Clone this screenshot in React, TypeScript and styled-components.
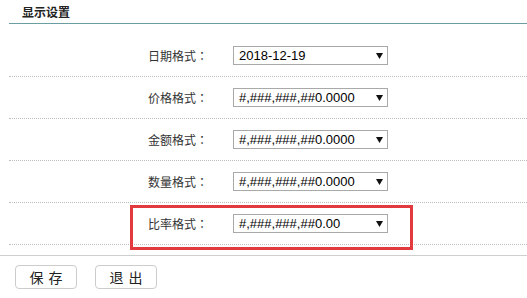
import React from "react";
import styled, { createGlobalStyle } from "styled-components";

const GlobalStyle = createGlobalStyle`
  html, body {
    margin: 0;
    padding: 0;
    background: #fff;
  }
  body {
    font-family: "Liberation Sans", "Noto Sans CJK SC", sans-serif;
    color: #333;
  }
`;

const Page = styled.div`
  width: 527px;
  height: 298px;
  overflow: hidden;
  background: #fff;
`;

const Header = styled.div`
  margin-left: 9px;
  height: 24px;
  border-bottom: 1.5px solid #6a9ea3;
  display: flex;
  align-items: center;
  padding-left: 13px;
  box-sizing: border-box;
`;

const Title = styled.h3`
  margin: 0;
  font-family: "Noto Sans CJK SC", sans-serif;
  font-size: 12px;
  font-weight: 700;
  color: #222;
`;

const Form = styled.div`
  margin-left: 9px;
  padding-top: 11px;
`;

const Row = styled.div`
  position: relative;
  height: 42px;
  box-sizing: border-box;
  border-bottom: 1px dotted #bdbdbd;
  display: grid;
  grid-template-columns: 199px 155px;
  column-gap: 25px;
  align-items: center;
`;

const Label = styled.span`
  text-align: right;
  font-family: "Noto Sans CJK SC", sans-serif;
  font-size: 12px;
  color: #333;
`;

const Colon = styled.span`
  display: inline-block;
  width: 12px;
  text-align: center;
  font-family: "Noto Sans CJK TC", sans-serif;
`;

const SelectBox = styled.div`
  height: 19px;
  box-sizing: border-box;
  border: 1px solid #a9a9a9;
  display: flex;
  align-items: center;
  justify-content: space-between;
  padding: 0 4px 0 5px;
  background: #fff;
  cursor: default;
`;

const SelectValue = styled.span`
  font-family: "Liberation Sans", Arial, sans-serif;
  font-size: 13px;
  color: #000;
  line-height: 1;
`;

const Highlight = styled.div`
  position: absolute;
  left: 121px;
  top: 2px;
  width: 283px;
  height: 45px;
  box-sizing: border-box;
  border: 3px solid #e23a3e;
  pointer-events: none;
`;

const Footer = styled.div`
  margin-top: 10px;
  border-top: 1px solid #cfcfcf;
  padding: 9px 0 0 15px;
  display: flex;
  gap: 18px;
`;

const Button = styled.button`
  width: 62px;
  height: 24px;
  background: #fff;
  border: 1px solid #cccccc;
  border-radius: 4px;
  font-family: "Noto Sans CJK SC", sans-serif;
  font-size: 14px;
  letter-spacing: 5px;
  text-indent: 5px;
  color: #222;
  padding: 0;
  display: flex;
  align-items: center;
  justify-content: center;
`;

const Arrow = () => (
  <svg width="7" height="6" viewBox="0 0 7 6">
    <polygon points="0,0 7,0 3.5,6" fill="#111" />
  </svg>
);

const rows = [
  { label: "日期格式", value: "2018-12-19" },
  { label: "价格格式", value: "#,###,###,##0.0000" },
  { label: "金额格式", value: "#,###,###,##0.0000" },
  { label: "数量格式", value: "#,###,###,##0.0000" },
  { label: "比率格式", value: "#,###,###,##0.00", highlighted: true },
];

export default function App() {
  return (
    <Page>
      <GlobalStyle />
      <Header>
        <Title>显示设置</Title>
      </Header>
      <Form>
        {rows.map((r) => (
          <Row key={r.label}>
            <Label>
              {r.label}
              <Colon>：</Colon>
            </Label>
            <SelectBox>
              <SelectValue>{r.value}</SelectValue>
              <Arrow />
            </SelectBox>
            {r.highlighted && <Highlight />}
          </Row>
        ))}
      </Form>
      <Footer>
        <Button>保存</Button>
        <Button>退出</Button>
      </Footer>
    </Page>
  );
}
